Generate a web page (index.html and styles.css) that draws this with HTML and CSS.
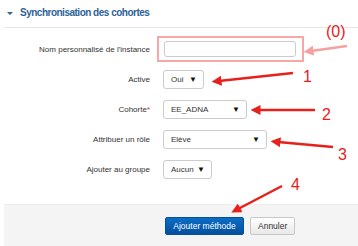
FILE: index.html
```html
<!DOCTYPE html>
<html lang="fr">
<head>
    <meta charset="UTF-8">
    <title>Synchronisation des cohortes</title>
    <link rel="stylesheet" href="styles.css">
</head>
<body>
<div class="panel">
    <h3 class="legend"><span class="caret"></span>Synchronisation des cohortes</h3>
    <div class="fields">
        <label class="lbl" for="customname">Nom personnalisé de l'instance</label>
        <div class="ctl highlight"><input type="text" id="customname" class="text-input"></div>

        <label class="lbl" for="status">Active</label>
        <div class="ctl"><div class="sel w-oui" id="status">Oui<span class="arr">&#9660;</span></div></div>

        <label class="lbl" for="cohort">Cohorte<span class="req">*</span></label>
        <div class="ctl"><div class="sel w-coh" id="cohort">EE_ADNA<span class="arr">&#9660;</span></div></div>

        <label class="lbl" for="role">Attribuer un rôle</label>
        <div class="ctl"><div class="sel w-role" id="role">Elève<span class="arr">&#9660;</span></div></div>

        <label class="lbl" for="group">Ajouter au groupe</label>
        <div class="ctl"><div class="sel w-grp" id="group">Aucun<span class="arr">&#9660;</span></div></div>
    </div>
    <div class="actions">
        <button class="btn btn-primary">Ajouter méthode</button>
        <button class="btn">Annuler</button>
    </div>
</div>

<!-- annotations par-dessus la capture -->
<svg class="notes" width="358" height="246" viewBox="0 0 358 246">
    <defs>
        <marker id="head" markerWidth="4" markerHeight="4" refX="1" refY="2" orient="auto">
            <path d="M0,0 L4,2 L0,4 z" fill="#e8201c"/>
        </marker>
        <marker id="headpink" markerWidth="4" markerHeight="4" refX="1" refY="2" orient="auto">
            <path d="M0,0 L4,2 L0,4 z" fill="#f6a0a0"/>
        </marker>
    </defs>
    <line x1="347" y1="46" x2="311" y2="51" stroke="#f6a0a0" stroke-width="2.5" marker-end="url(#headpink)"/>
    <line x1="293" y1="73" x2="219" y2="81" stroke="#e8201c" stroke-width="2.5" marker-end="url(#head)"/>
    <line x1="315" y1="110" x2="258" y2="110" stroke="#e8201c" stroke-width="2.5" marker-end="url(#head)"/>
    <line x1="333" y1="147" x2="278" y2="142" stroke="#e8201c" stroke-width="2.5" marker-end="url(#head)"/>
    <line x1="282" y1="186" x2="238" y2="209" stroke="#e8201c" stroke-width="2.5" marker-end="url(#head)"/>
    <text x="326" y="37" class="num">(0)</text>
    <text x="303" y="82" class="num">1</text>
    <text x="322" y="120" class="num">2</text>
    <text x="338" y="160" class="num">3</text>
    <text x="291" y="190" class="num">4</text>
</svg>
</body>
</html>
```

FILE: styles.css
```css
body {
    margin: 0;
    font-family: "Liberation Sans", Arial, sans-serif;
    background: #fff;
    width: 358px;
    height: 246px;
    overflow: hidden;
    position: relative;
}
.panel {
    padding-left: 4px;
}
.legend {
    margin: 0;
    height: 28px;
    padding: 7px 0 0 2px;
    box-sizing: border-box;
    font-size: 10px;
    letter-spacing: -0.5px;
    font-weight: bold;
    color: #2d6299;
    border-bottom: 1px solid #e6e6e6;
    display: flex;
    align-items: flex-start;
}
.caret {
    width: 0;
    height: 0;
    border-left: 3px solid transparent;
    border-right: 3px solid transparent;
    border-top: 3px solid #2d6299;
    margin: 5px 7px 0 1px;
}
.fields {
    display: grid;
    grid-template-columns: 146px auto;
    grid-auto-rows: 30px;
    column-gap: 13px;
    padding-top: 6px;
    align-items: center;
    font-size: 8px;
    color: #333;
}
.lbl {
    text-align: right;
}
.req {
    color: #e02020;
}
.ctl {
    display: flex;
}
.highlight {
    margin-left: -6px;
    padding: 3px 5px;
    border: 2px solid #f6a8a8;
    width: 133px;
}
.text-input {
    width: 132px;
    height: 16px;
    box-sizing: border-box;
    border: 1px solid #ccc;
    border-radius: 3px;
    margin: 0;
}
.sel {
    height: 19px;
    box-sizing: border-box;
    border: 1px solid #ccc;
    border-radius: 3px;
    padding: 0 6px 0 7px;
    display: flex;
    align-items: center;
    justify-content: space-between;
    font-size: 8px;
    color: #333;
}
.arr {
    font-size: 8px;
    color: #111;
}
.w-oui { width: 41px; }
.w-coh { width: 84px; }
.w-role { width: 104px; }
.w-grp { width: 49px; }
.actions {
    margin-top: 20px;
    background: #f4f4f4;
    border-top: 1px solid #ececec;
    height: 43px;
    box-sizing: border-box;
    display: flex;
    align-items: flex-start;
    padding: 12px 0 0 161px;
    gap: 6px;
}
.btn {
    height: 18px;
    padding: 0 7px;
    font-family: "Liberation Sans", Arial, sans-serif;
    font-size: 8.5px;
    color: #333;
    border: 1px solid #c8c8c8;
    border-radius: 2px;
    background: linear-gradient(#fff, #e8e8e8);
}
.btn-primary {
    width: 79px;
    color: #fff;
    border-color: #04519b;
    background: linear-gradient(#0a6cc4, #05509e);
}
.notes {
    position: absolute;
    left: 0;
    top: 0;
}
.num {
    font-family: "Liberation Sans", Arial, sans-serif;
    font-size: 16px;
    fill: #e8201c;
}
```
